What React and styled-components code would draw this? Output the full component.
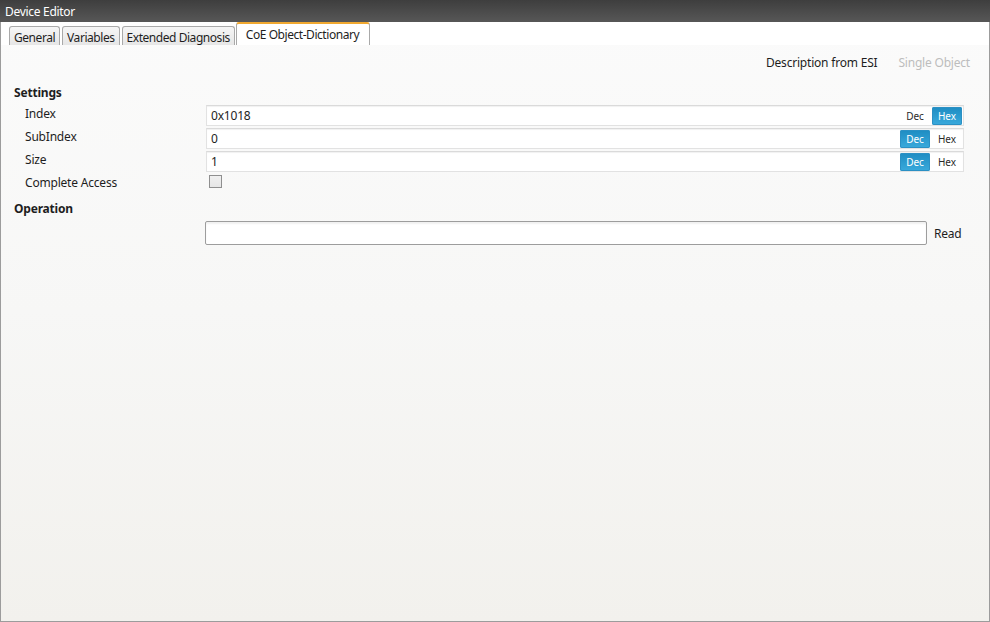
import React, { useState } from "react";
import styled, { createGlobalStyle } from "styled-components";

const GlobalStyle = createGlobalStyle`
    html, body {
        margin: 0;
        padding: 0;
        width: 990px;
        height: 622px;
        overflow: hidden;
    }
    body {
        font-family: "Noto Sans", "Open Sans", sans-serif;
        font-size: 12px;
        color: #1e1e1e;
    }
    * { box-sizing: border-box; }
`;

const Window = styled.div`
    display: flex;
    flex-direction: column;
    width: 990px;
    height: 622px;
    border: 1px solid #9c9c9c;
    border-top: none;
    background: linear-gradient(to bottom, #fbfbfb 0%, #f7f7f6 50%, #f2f1ed 100%);
`;

const TitleBar = styled.div`
    height: 22px;
    margin: 0 -1px;
    padding: 0 5px;
    display: flex;
    align-items: center;
    color: #ffffff;
    font-size: 12px;
    letter-spacing: -0.3px;
    background: linear-gradient(to bottom, #3e3e3e 0%, #575757 100%);
`;

const TabStrip = styled.div`
    display: flex;
    align-items: flex-end;
    gap: 2px;
    height: 23px;
    padding-left: 8px;
    background: #ffffff;
`;

const Tab = styled.div`
    height: ${(p) => (p.$active ? "23px" : "19px")};
    padding: 0 ${(p) => (p.$active ? "10px 0 9px" : "4px")};
    display: flex;
    align-items: center;
    border: 1px solid #a9a9a9;
    border-bottom: none;
    border-top: ${(p) => (p.$active ? "2px solid #f0a830" : "1px solid #a9a9a9")};
    border-radius: 3px 3px 0 0;
    background: ${(p) =>
        p.$active ? "#ffffff" : "linear-gradient(to bottom, #f6f6f6 0%, #e6e6e6 100%)"};
    color: #1e1e1e;
    letter-spacing: -0.45px;
    padding-top: ${(p) => (p.$active ? "0" : "2px")};
    margin-left: ${(p) => (p.$active ? "-1px" : "0")};
`;

const Content = styled.div`
    flex: 1;
    padding: 5px 19px 0 13px;
`;

const ModeBar = styled.div`
    display: flex;
    justify-content: flex-end;
    gap: 21px;
    height: 24px;
    align-items: center;
    margin-bottom: 8px;
`;

const ModeItem = styled.span`
    color: ${(p) => (p.$disabled ? "#bdbdbd" : "#1e1e1e")};
    letter-spacing: -0.2px;
`;

const SectionTitle = styled.div`
    font-weight: 700;
    height: 20px;
    display: flex;
    align-items: center;
    letter-spacing: -0.2px;
`;

const Grid = styled.div`
    display: grid;
    grid-template-columns: 181px 1fr;
    row-gap: 2px;
    padding-left: 11px;
    padding-right: 6px;
    margin-top: 3px;
    margin-bottom: 3px;
`;

const Label = styled.div`
    height: 21px;
    display: flex;
    align-items: center;
    padding-bottom: 4px;
    letter-spacing: -0.2px;
`;

const Field = styled.div`
    display: flex;
    align-items: center;
    height: 21px;
    background: #ffffff;
    border: 1px solid #e2e2e2;
    border-top-color: #dadada;
    box-shadow: inset 0 1px 1px rgba(0, 0, 0, 0.06);
`;

const FieldText = styled.div`
    flex: 1;
    padding-left: 4px;
    color: #1e1e1e;
    letter-spacing: -0.2px;
`;

const Toggle = styled.div`
    display: flex;
    gap: 2px;
    padding-right: 1px;
`;

const ToggleButton = styled.button`
    width: 30px;
    height: 18px;
    border: none;
    border-radius: 2px;
    padding: 0;
    font-family: inherit;
    font-size: 10px;
    cursor: pointer;
    color: ${(p) => (p.$on ? "#ffffff" : "#2a2a2a")};
    background: ${(p) =>
        p.$on ? "linear-gradient(to bottom, #1e8cc2 0%, #3aaadc 100%)" : "transparent"};
    box-shadow: ${(p) => (p.$on ? "inset 0 0 0 1px #2b90c4" : "none")};
`;

const CheckBox = styled.div`
    width: 13px;
    height: 13px;
    margin: 1px 0 0 3px;
    border: 1px solid #8f8f8f;
    background: linear-gradient(to bottom, #f0f0f0, #e6e6e6);
`;

const OperationRow = styled.div`
    display: grid;
    grid-template-columns: 180px 1fr auto;
    align-items: center;
    padding-left: 11px;
    margin-top: 3px;
`;

const OperationInput = styled.div`
    height: 24px;
    background: #ffffff;
    border: 1px solid #9d9d9d;
    border-radius: 2px;
    box-shadow: inset 0 2px 2px rgba(0, 0, 0, 0.06);
`;

const ActionLabel = styled.span`
    margin-left: 7px;
    width: 36px;
    letter-spacing: -0.2px;
`;

const tabs = ["General", "Variables", "Extended Diagnosis", "CoE Object-Dictionary"];

const NumberField = ({ value, hex, onChange }) => (
    <Field>
        <FieldText>{value}</FieldText>
        <Toggle>
            <ToggleButton $on={!hex} onClick={() => onChange(false)}>Dec</ToggleButton>
            <ToggleButton $on={hex} onClick={() => onChange(true)}>Hex</ToggleButton>
        </Toggle>
    </Field>
);

const App = () => {
    const [formats, setFormats] = useState({ index: true, sub: false, size: false });
    const setFormat = (key) => (hex) => setFormats({ ...formats, [key]: hex });

    return (
        <>
            <GlobalStyle />
            <Window>
                <TitleBar>Device Editor</TitleBar>
                <TabStrip>
                    {tabs.map((t, i) => (
                        <Tab key={t} $active={i === tabs.length - 1}>{t}</Tab>
                    ))}
                </TabStrip>
                <Content>
                    <ModeBar>
                        <ModeItem>Description from ESI</ModeItem>
                        <ModeItem $disabled>Single Object</ModeItem>
                    </ModeBar>
                    <SectionTitle>Settings</SectionTitle>
                    <Grid>
                        <Label>Index</Label>
                        <NumberField value="0x1018" hex={formats.index} onChange={setFormat("index")} />
                        <Label>SubIndex</Label>
                        <NumberField value="0" hex={formats.sub} onChange={setFormat("sub")} />
                        <Label>Size</Label>
                        <NumberField value="1" hex={formats.size} onChange={setFormat("size")} />
                        <Label>Complete Access</Label>
                        <div><CheckBox /></div>
                    </Grid>
                    <SectionTitle>Operation</SectionTitle>
                    <OperationRow>
                        <span />
                        <OperationInput />
                        <ActionLabel>Read</ActionLabel>
                    </OperationRow>
                </Content>
            </Window>
        </>
    );
};

export default App;
